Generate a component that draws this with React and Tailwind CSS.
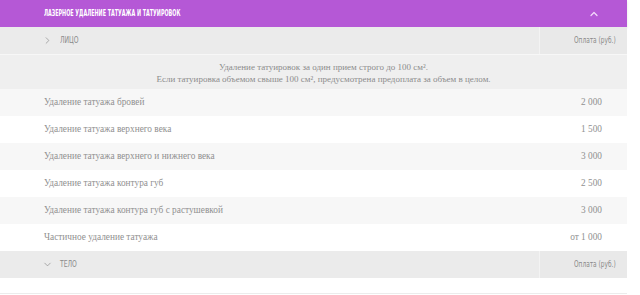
import { ChevronUp, ChevronRight, ChevronDown } from 'lucide-react'

const ROWS = [
  ['Удаление татуажа бровей', '2 000'],
  ['Удаление татуажа верхнего века', '1 500'],
  ['Удаление татуажа верхнего и нижнего века', '3 000'],
  ['Удаление татуажа контура губ', '2 500'],
  ['Удаление татуажа контура губ с растушевкой', '3 000'],
  ['Частичное удаление татуажа', 'от 1 000'],
]

const cond = { fontFamily: '"DejaVu Sans Condensed", "Liberation Sans", sans-serif' }
const serif = { fontFamily: '"Liberation Serif", serif' }

function GroupRow({ title, open }) {
  return (
    <div className="flex h-[27px] bg-[#ebebeb]">
      <div className="flex-1 flex items-center pl-[42px] gap-[7px] text-[#8a8a8a]">
        {open ? <ChevronDown size={11} strokeWidth={1.5} /> : <ChevronRight size={11} strokeWidth={1.5} />}
        <span className="text-[9px] inline-block scale-x-[0.75] origin-left" style={cond}>{title}</span>
      </div>
      <div className="w-[88px] border-l border-[#f3f3f3] bg-[#e9e9e9] flex items-center pl-[34px]">
        <span className="text-[9px] text-[#8a8a8a] inline-block whitespace-nowrap scale-x-[0.72] origin-left" style={cond}>Оплата (руб.)</span>
      </div>
    </div>
  )
}

export default function App() {
  return (
    <div className="w-[640px] h-[295px] bg-white overflow-hidden">
      <div className="w-[627px]">
        <div className="flex items-center justify-between h-[27px] bg-[#b558d6] pl-[44px] pr-[27px] shadow-sm">
          <span className="text-white text-[9px] font-bold uppercase inline-block whitespace-nowrap scale-x-[0.6] origin-left" style={cond}>
            Лазерное удаление татуажа и татуировок
          </span>
          <ChevronUp size={12} strokeWidth={2.5} className="text-[#f3d8fb]" />
        </div>

        <GroupRow title="ЛИЦО" />

        <div className="h-[35px] bg-[#efefef] border-t border-[#f7f7f7] flex flex-col items-center justify-center text-[9px] leading-[12px] text-[#8c8c8c] pl-[20px] pt-[1px]" style={serif}>
          <p>Удаление татуировок за один прием строго до 100 см².</p>
          <p>Если татуировка объемом свыше 100 см², предусмотрена предоплата за объем в целом.</p>
        </div>

        {ROWS.map(([name, price], i) => (
          <div key={name} className={`flex h-[27px] items-center ${i % 2 === 0 ? 'bg-[#f7f7f7]' : 'bg-white'}`}>
            <div className="flex-1 pl-[44px] text-[9.3px] text-[#909090]" style={serif}>{name}</div>
            <div className="w-[88px] text-right pr-[25px] text-[9.3px] text-[#909090]" style={serif}>{price}</div>
          </div>
        ))}

        <GroupRow title="ТЕЛО" open />

        <div className="h-[15px] bg-white" />
        <div className="h-px bg-[#ececec]" />
      </div>
    </div>
  )
}
